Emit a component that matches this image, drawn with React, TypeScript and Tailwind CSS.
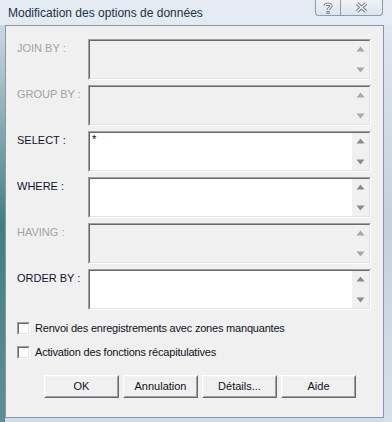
import React from 'react';

const font = { fontFamily: '"Liberation Sans", Arial, sans-serif' };

const SunkenBox = ({ disabled, children }: { disabled?: boolean; children?: React.ReactNode }) => (
  <div className="h-[41px] border border-t-[#a0a0a0] border-l-[#a0a0a0] border-b-white border-r-white">
    <div className="h-full flex border border-t-[#696969] border-l-[#696969] border-b-[#e3e3e3] border-r-[#e3e3e3]">
      <div className={`flex-1 px-[2px] text-[11px] leading-[13px] text-black ${disabled ? 'bg-[#f0f0f0]' : 'bg-white'}`}>
        {children}
      </div>
      <div className="w-[17px] bg-[#f0f0f0] flex flex-col justify-between items-center py-[5px]">
        <svg width="9" height="6" viewBox="0 0 9 6">
          <path d="M0.5 5.5 L4.5 0.5 L8.5 5.5 Z" fill={disabled ? '#a8a8a8' : '#8a8a8a'} />
        </svg>
        <svg width="9" height="6" viewBox="0 0 9 6">
          <path d="M0.5 0.5 L4.5 5.5 L8.5 0.5 Z" fill={disabled ? '#a8a8a8' : '#8a8a8a'} />
        </svg>
      </div>
    </div>
  </div>
);

const Checkbox = ({ label }: { label: string }) => (
  <div className="flex items-center h-[13px]">
    <div className="w-[13px] h-[13px] border border-t-[#a0a0a0] border-l-[#a0a0a0] border-b-white border-r-white">
      <div className="w-full h-full bg-white border border-t-[#696969] border-l-[#696969] border-b-[#e3e3e3] border-r-[#e3e3e3]" />
    </div>
    <span className="ml-[5px] text-[11px] leading-[13px] tracking-[-0.2px] text-[#111122]">{label}</span>
  </div>
);

const Button = ({ label }: { label: string }) => (
  <button className="w-[75px] h-[23px] bg-[#f0f0f0] border border-t-white border-l-white border-b-[#696969] border-r-[#696969]">
    <div className="w-full h-full flex items-center justify-center border border-t-[#f4f4f4] border-l-[#f4f4f4] border-b-[#a0a0a0] border-r-[#a0a0a0] text-[11px] text-[#111122]">
      {label}
    </div>
  </button>
);

const rows = [
  { label: 'JOIN BY :', disabled: true },
  { label: 'GROUP BY :', disabled: true },
  { label: 'SELECT :', disabled: false, value: '*' },
  { label: 'WHERE :', disabled: false },
  { label: 'HAVING :', disabled: true },
  { label: 'ORDER BY :', disabled: false },
];

export default function App() {
  return (
    <div
      className="w-[392px] h-[422px] overflow-hidden flex flex-col bg-gradient-to-b from-[#e4ebf3] via-[#d9e4ef] to-[#cfdbe8]"
      style={font}
    >
      {/* title bar */}
      <div className="h-[25px] flex items-start shrink-0">
        <div className="pl-[8px] pt-[5px] text-[12px] leading-[16px] text-[#24303f]">
          Modification des options de données
        </div>
        <div className="ml-auto mr-[9px] flex h-[16px] border border-t-0 border-[#8d9bab] rounded-b-[4px] bg-gradient-to-b from-[#eef2f7] to-[#dde5ee] overflow-hidden">
          <div className="w-[25px] flex items-center justify-center border-r border-[#8d9bab]">
            <svg width="10" height="12" viewBox="0 0 10 12">
              <path d="M2 4 C2 1.5 8 1.5 8 4 C8 6 5 6 5 8" fill="none" stroke="#6b7785" strokeWidth="3" />
              <path d="M2 4 C2 1.5 8 1.5 8 4 C8 6 5 6 5 8" fill="none" stroke="#ffffff" strokeWidth="1.2" />
              <rect x="3.5" y="9" width="3" height="3" fill="#6b7785" />
              <rect x="4.4" y="9.9" width="1.2" height="1.2" fill="#ffffff" />
            </svg>
          </div>
          <div className="w-[41px] flex items-center justify-center">
            <svg width="13" height="11" viewBox="0 0 13 11">
              <path d="M2 1.5 L11 9.5 M11 1.5 L2 9.5" stroke="#6b7785" strokeWidth="3.4" />
              <path d="M2 1.5 L11 9.5 M11 1.5 L2 9.5" stroke="#ffffff" strokeWidth="1.4" />
            </svg>
          </div>
        </div>
      </div>

      <div className="flex flex-1">
        {/* left glass edge */}
        <div className="w-[5px] bg-gradient-to-b from-[#cdd8e3] via-[#3f7f86] to-[#5d8f99]" />
        {/* client area */}
        <div className="w-[379px] h-[393px] bg-[#f0f0f0] border border-[#8797a8]">
          <div className="grid grid-cols-[71px_283px] gap-y-[5px] pl-[11px] pt-[13px]">
            {rows.map((r) => (
              <React.Fragment key={r.label}>
                <div className={`pt-[3px] text-[11px] leading-[13px] ${r.disabled ? 'text-[#a3a3a3]' : 'text-[#111133]'}`}>
                  {r.label}
                </div>
                <SunkenBox disabled={r.disabled}>{r.value}</SunkenBox>
              </React.Fragment>
            ))}
          </div>

          <div className="pl-[11px] pt-[12px] flex flex-col gap-[11px]">
            <Checkbox label="Renvoi des enregistrements avec zones manquantes" />
            <Checkbox label="Activation des fonctions récapitulatives" />
          </div>

          <div className="pl-[38px] pt-[16px] flex gap-[4px]">
            <Button label="OK" />
            <Button label="Annulation" />
            <Button label="Détails..." />
            <Button label="Aide" />
          </div>
        </div>
        {/* right glass edge */}
        <div className="w-[8px] bg-gradient-to-b from-[#dfe7ef] via-[#c3d0dc] to-[#d6e0ea]" />
      </div>
    </div>
  );
}
